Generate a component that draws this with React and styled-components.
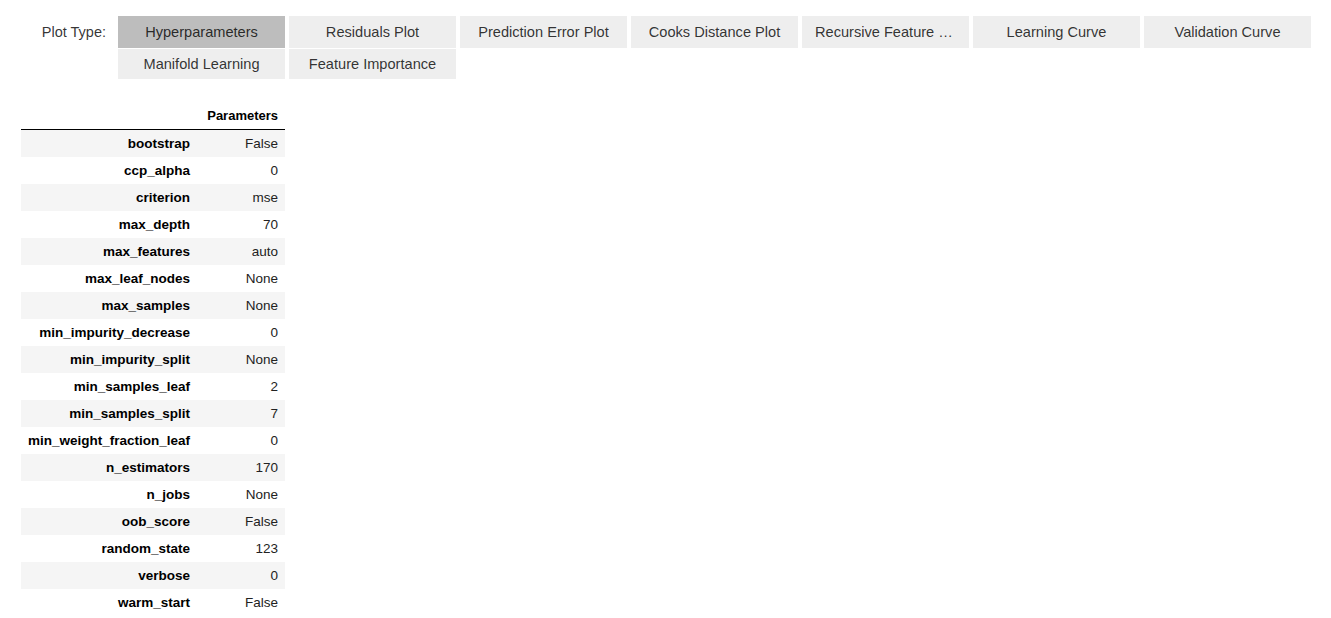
import React from "react";
import styled, { createGlobalStyle } from "styled-components";

const GlobalStyle = createGlobalStyle`
  body {
    margin: 0;
    background: #fff;
    font-family: "Liberation Sans", Arial, sans-serif;
    color: #000;
  }
`;

const Page = styled.div`
  padding: 16px 0 0 0;
`;

const Toolbar = styled.div`
  display: flex;
  align-items: flex-start;
`;

const Label = styled.div`
  width: 110px;
  padding-right: 4px;
  box-sizing: border-box;
  margin-right: 8px;
  height: 32px;
  line-height: 32px;
  text-align: right;
  font-size: 14.5px;
  color: rgba(0, 0, 0, 0.8);
`;

const ButtonGrid = styled.div`
  display: grid;
  grid-template-columns: repeat(7, 167px);
  grid-auto-rows: 32px;
  column-gap: 4px;
  row-gap: 0;
`;

const ToggleButton = styled.button`
  height: ${p => (p.second ? "30px" : "32px")};
  margin-top: ${p => (p.second ? "1px" : "0")};
  padding: 0 13px;
  border: none;
  font-family: inherit;
  font-size: 14.6px;
  color: rgba(0, 0, 0, 0.8);
  background: ${p => (p.active ? "#bdbdbd" : "#eeeeee")};
  white-space: nowrap;
  overflow: hidden;
  text-overflow: ellipsis;
  cursor: pointer;
`;

const Table = styled.table`
  margin: 21px 0 0 21px;
  border-collapse: collapse;
  font-size: 13.5px;
`;

const HeadCell = styled.th`
  height: 28px;
  padding: 0 7px;
  text-align: right;
  font-weight: bold;
  font-size: 13px;
  border-bottom: 1px solid #000;
  vertical-align: middle;
`;

const Row = styled.tr`
  background: ${p => (p.striped ? "#f5f5f5" : "#fff")};
`;

const KeyCell = styled.th`
  height: 27px;
  padding: 0 7px;
  text-align: right;
  font-weight: bold;
`;

const ValueCell = styled.td`
  height: 27px;
  padding: 0 7px;
  text-align: right;
  width: 74px;
  color: #222;
`;

const plotTypes = [
  "Hyperparameters",
  "Residuals Plot",
  "Prediction Error Plot",
  "Cooks Distance Plot",
  "Recursive Feature Elimination",
  "Learning Curve",
  "Validation Curve",
  "Manifold Learning",
  "Feature Importance",
];

const params = [
  ["bootstrap", "False"],
  ["ccp_alpha", "0"],
  ["criterion", "mse"],
  ["max_depth", "70"],
  ["max_features", "auto"],
  ["max_leaf_nodes", "None"],
  ["max_samples", "None"],
  ["min_impurity_decrease", "0"],
  ["min_impurity_split", "None"],
  ["min_samples_leaf", "2"],
  ["min_samples_split", "7"],
  ["min_weight_fraction_leaf", "0"],
  ["n_estimators", "170"],
  ["n_jobs", "None"],
  ["oob_score", "False"],
  ["random_state", "123"],
  ["verbose", "0"],
  ["warm_start", "False"],
];

export default function App() {
  return (
    <Page>
      <GlobalStyle />
      <Toolbar>
        <Label>Plot Type:</Label>
        <ButtonGrid>
          {plotTypes.map((t, i) => (
            <ToggleButton key={t} active={i === 0} second={i >= 7} title={t}>
              {t}
            </ToggleButton>
          ))}
        </ButtonGrid>
      </Toolbar>

      <Table>
        <thead>
          <tr>
            <HeadCell />
            <HeadCell>Parameters</HeadCell>
          </tr>
        </thead>
        <tbody>
          {params.map(([k, v], i) => (
            <Row key={k} striped={i % 2 === 0}>
              <KeyCell>{k}</KeyCell>
              <ValueCell>{v}</ValueCell>
            </Row>
          ))}
        </tbody>
      </Table>
    </Page>
  );
}
